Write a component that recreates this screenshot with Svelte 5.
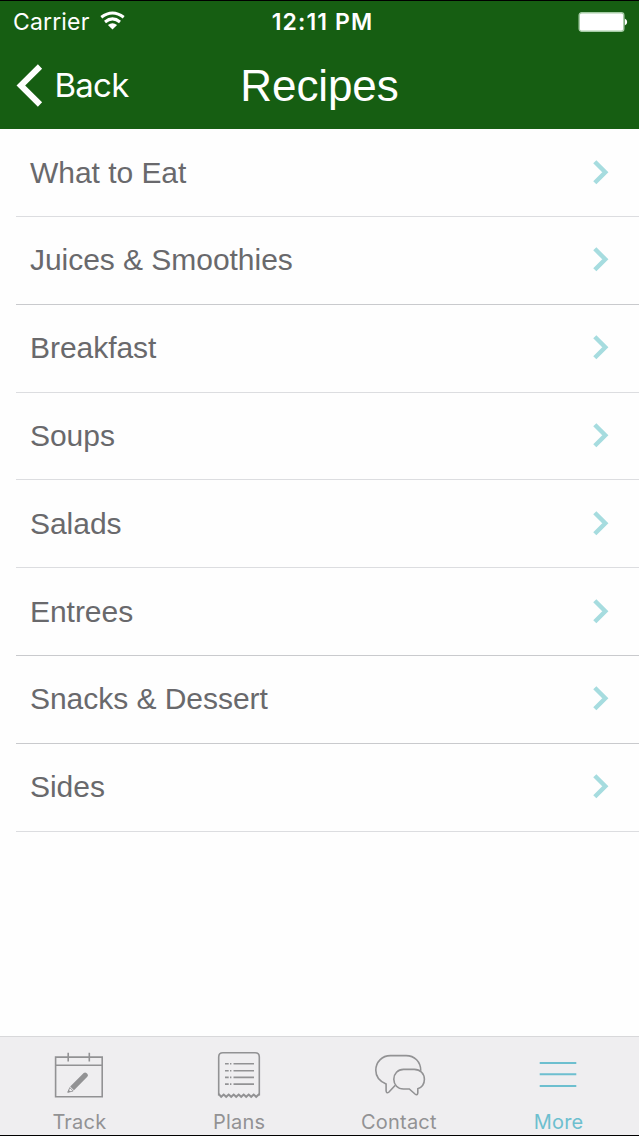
<script lang="ts">
  type Tab = 'track' | 'plans' | 'contact' | 'more';

  const recipes = [
    { title: 'What to Eat' },
    { title: 'Juices & Smoothies', strong: true },
    { title: 'Breakfast' },
    { title: 'Soups' },
    { title: 'Salads' },
    { title: 'Entrees', strong: true },
    { title: 'Snacks & Dessert', strong: true },
    { title: 'Sides' }
  ];

  const tabs: { id: Tab; label: string }[] = [
    { id: 'track', label: 'Track' },
    { id: 'plans', label: 'Plans' },
    { id: 'contact', label: 'Contact' },
    { id: 'more', label: 'More' }
  ];

  let active: Tab = $state('more');
</script>

<div class="screen">
  <header>
    <div class="status-bar">
      <div class="carrier">
        <span class="carrier-name">Carrier</span>
        <svg width="25" height="19" viewBox="0 0 25 19" fill="none" stroke="#fff" stroke-width="3">
          <path d="M1.3 6.3Q12.5 -2.3 23.7 6.3" />
          <path d="M5 11Q12.5 4.8 20 11" />
          <path d="M12.5 18.6L7.9 14Q12.5 10.6 17.1 14Z" fill="#fff" stroke="none" />
        </svg>
      </div>
      <span class="clock">12:11 PM</span>
      <svg class="battery" width="50" height="20" viewBox="0 0 50 20">
        <rect x="1.2" y="0.7" width="44.6" height="18.6" rx="2.5" fill="#fff" stroke="#a5cba5" stroke-width="1.4" />
        <path d="M46.8 6.5Q49.2 7.5 49.2 10T46.8 13.5Z" fill="#fff" />
      </svg>
    </div>

    <nav class="nav-bar">
      <button class="back">
        <svg width="27" height="43" viewBox="0 0 27 43">
          <path d="M24 2.5L4.8 21.5L24 40.5" fill="none" stroke="#fff" stroke-width="6" />
        </svg>
        <span>Back</span>
      </button>
      <h1>Recipes</h1>
    </nav>
  </header>

  <ul class="list">
    {#each recipes as recipe}
      <li class:strong={recipe.strong}>
        <span>{recipe.title}</span>
        <svg width="17" height="26" viewBox="0 0 17 26">
          <path d="M2.8 1.8L13.3 12.3L2.8 22.8" fill="none" stroke="#a6dcdf" stroke-width="4.4" />
        </svg>
      </li>
    {/each}
  </ul>

  <nav class="tab-bar">
    {#each tabs as tab}
      <button class="tab" class:active={active === tab.id} onclick={() => (active = tab.id)}>
        <svg width="60" height="56" viewBox="0 0 60 56" fill="none" stroke="currentColor" stroke-width="1.6">
          {#if tab.id === 'track'}
            <path d="M6.6 11.1H53.2V50.7H6.6ZM6.6 19.2H53.2M19.2 6.7V15.5M40.3 6.7V15.5" />
            <path d="M21.2 40.4L34.7 27Q36.2 25.8 37.4 27L38.5 28.1Q39.6 29.5 38.3 30.8L25 44.2Z" fill="currentColor" stroke="none" />
            <path d="M20.8 41.6L24.2 45L18.8 46.3Z" stroke-width="0.9" />
            <path d="M18.6 46.6L19.3 43.4L21.7 45.8Z" fill="currentColor" stroke="none" />
          {:else if tab.id === 'plans'}
            <path d="M9.7 49.5V11Q9.7 6.8 13.9 6.8H46.1Q50.3 6.8 50.3 11V49.5" />
            <path d="M9.7 48L12.2 50.8L14.7 48.6L17.2 50.8L19.7 48.6L22.2 50.8L24.7 48.6L27.2 50.8L29.7 48.6L32.2 50.8L34.7 48.6L37.2 50.8L39.7 48.6L42.2 50.8L44.7 48.6L47.2 50.8L50.3 48" stroke-width="2" />
            <path d="M16 17.8H19.7M21 17.8H22.4M24.5 17.8H45M16 24.7H19.7M21 24.7H22.4M24.5 24.7H45M16 31.4H19.7M21 31.4H22.4M24.5 31.4H45M16 38.1H19.7M21 38.1H22.4M24.5 38.1H45" />
          {:else if tab.id === 'contact'}
            <path d="M26.3 39.2L20 46Q17.5 48 17.1 45V38C11 35.5 6.8 30.5 6.8 24.3C6.8 16 13 9.6 21.5 9.6H37C45.5 9.6 51.8 15.5 51.8 24.8" />
            <path d="M34.5 23.4H45.3C51.3 23.4 55.4 27.6 55.4 33.3C55.4 37.8 53 41.3 48.8 42.8V47Q48.2 49.8 46 48L40.3 43H34.5C28.8 43 24.8 38.8 24.8 33.2S28.8 23.4 34.5 23.4Z" />
          {:else}
            <path d="M10.7 17.1H47.3M10.7 28.3H47.3M10.7 40.1H47.3" stroke-width="2" />
          {/if}
        </svg>
        <span>{tab.label}</span>
      </button>
    {/each}
  </nav>
</div>

<style>
  :global(body) {
    margin: 0;
    background: #fff;
  }

  .screen {
    display: flex;
    flex-direction: column;
    box-sizing: border-box;
    width: 639px;
    height: 1136px;
    overflow: hidden;
    border-top: 1px solid #000;
    border-bottom: 1.5px solid #000;
    background: #fefefe;
    font-family: 'Liberation Sans', Arial, sans-serif;
  }

  button {
    margin: 0;
    padding: 0;
    border: 0;
    background: none;
    color: inherit;
    font: inherit;
  }

  header {
    flex: none;
    height: 127.5px;
    background: #165e12;
    color: #fff;
  }

  .status-bar {
    display: grid;
    grid-template-columns: 1fr auto 1fr;
    align-items: center;
    height: 42px;
    padding: 0 11px 0 13px;
    font-family: Inter, sans-serif;
    font-size: 23px;
  }

  .carrier {
    display: flex;
    align-items: center;
    gap: 11px;
  }

  .carrier-name {
    letter-spacing: 0.15px;
  }

  .carrier svg {
    margin-bottom: 3px;
  }

  .clock {
    padding-left: 4px;
    font-weight: 600;
    letter-spacing: 1.1px;
  }

  .battery {
    justify-self: end;
  }

  .nav-bar {
    display: grid;
    grid-template-columns: 1fr auto 1fr;
    align-items: center;
    height: 85px;
    padding: 0 16px;
  }

  .back {
    display: flex;
    align-items: center;
    justify-self: start;
    gap: 11.5px;
    margin-bottom: 1px;
    font-family: Inter, sans-serif;
    font-size: 33px;
    letter-spacing: -0.75px;
  }

  h1 {
    margin: 0;
    font-size: 44px;
    font-weight: 400;
    line-height: 50px;
    letter-spacing: -0.1px;
  }

  .list {
    flex: 1;
    margin: 0;
    padding: 0.8px 0 0 16px;
    list-style: none;
  }

  li {
    display: flex;
    align-items: center;
    justify-content: space-between;
    box-sizing: border-box;
    height: 87.8px;
    padding: 0 30.5px 0 14px;
    border-bottom: 1px solid #dcdde0;
    color: #69696c;
    font-size: 30px;
    letter-spacing: -0.04px;
  }

  li.strong {
    border-color: #c9cacd;
  }

  .tab-bar {
    display: grid;
    grid-template-columns: repeat(4, 1fr);
    flex: none;
    box-sizing: border-box;
    height: 99px;
    border-top: 1px solid #d8d8da;
    background: #efeef0;
    color: #929294;
  }

  .tab {
    display: flex;
    flex-direction: column;
    align-items: center;
    gap: 8px;
    padding: 9px 1px 0 0;
    font-family: Inter, sans-serif;
    font-size: 20px;
    line-height: 24px;
    letter-spacing: 0.2px;
  }

  .tab.active {
    color: #6dbfcf;
  }
</style>
